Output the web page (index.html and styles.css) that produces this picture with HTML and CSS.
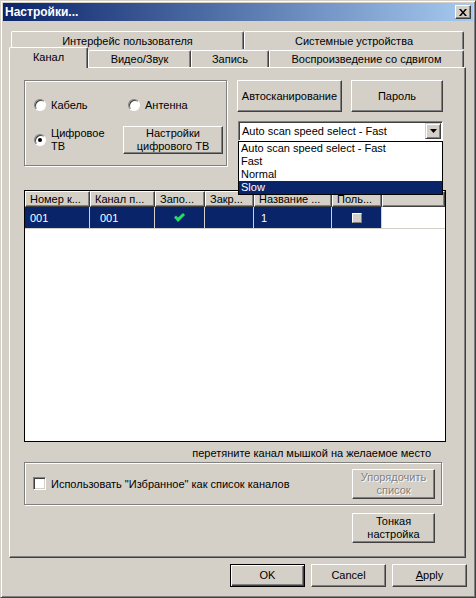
FILE: index.html
```html
<!DOCTYPE html>
<html lang="ru">
<head>
    <meta charset="UTF-8">
    <meta name="viewport" content="width=device-width, initial-scale=1.0">
    <title>Настройки...</title>
    <link rel="stylesheet" href="styles.css">
</head>
<body>
    <div class="window">
        <div class="titlebar">
            <span class="title">Настройки...</span>
            <button class="close-btn">
                <svg width="8" height="7" viewBox="0 0 8 7"><path d="M0 0h2l2 2.5L6 0h2L5 3.5 8 7H6L4 4.5 2 7H0l3-3.5z" fill="#000"/></svg>
            </button>
        </div>

        <div class="client">
            <!-- вкладки в два ряда -->
            <div class="tabs">
                <div class="tab-row back">
                    <div class="tab t-ui">Интерфейс пользователя</div>
                    <div class="tab t-dev">Системные устройства</div>
                </div>
                <div class="tab-row front">
                    <div class="tab active t-ch">Канал</div>
                    <div class="tab t-av">Видео/Звук</div>
                    <div class="tab t-rec">Запись</div>
                    <div class="tab t-ts">Воспроизведение со сдвигом</div>
                </div>
            </div>

            <div class="panel">
                <div class="top-row">
                    <div class="groupbox source-group">
                        <label class="radio-item"><span class="radio"></span>Кабель</label>
                        <label class="radio-item ant"><span class="radio"></span>Антенна</label>
                        <label class="radio-item"><span class="radio"><i class="dot"></i></span><span>Цифровое<br>ТВ</span></label>
                        <button class="btn dtv-btn">Настройки<br>цифрового ТВ</button>
                    </div>

                    <div class="scan-col">
                        <div class="btn-row">
                            <button class="btn autoscan-btn">Автосканирование</button>
                            <button class="btn pass-btn">Пароль</button>
                        </div>
                        <div class="combo">
                            <div class="combo-field">
                                <span class="combo-value">Auto scan speed select - Fast</span>
                                <span class="combo-arrow">
                                    <svg width="7" height="4" viewBox="0 0 7 4"><path d="M0 0h7L3.5 4z" fill="#000"/></svg>
                                </span>
                            </div>
                            <ul class="combo-list">
                                <li>Auto scan speed select - Fast</li>
                                <li>Fast</li>
                                <li>Normal</li>
                                <li class="selected">Slow</li>
                            </ul>
                        </div>
                    </div>
                </div>

                <div class="listview">
                    <div class="lv-header">
                        <div class="lv-col c1">Номер к...</div>
                        <div class="lv-col c2">Канал п...</div>
                        <div class="lv-col c3">Запо...</div>
                        <div class="lv-col c4">Закр...</div>
                        <div class="lv-col c5">Название ...</div>
                        <div class="lv-col c6">Поль...</div>
                        <div class="lv-col filler"></div>
                    </div>
                    <div class="lv-row">
                        <div class="lv-cell c1">001</div>
                        <div class="lv-cell c2 pad-wide">001</div>
                        <div class="lv-cell c3 center">
                            <svg width="11" height="9" viewBox="0 0 11 9"><path d="M0 4.5l2-2 2 2L9 0l2 2-7 7z" fill="#1fe05c"/></svg>
                        </div>
                        <div class="lv-cell c4"></div>
                        <div class="lv-cell c5 pad-mid">1</div>
                        <div class="lv-cell c6 center"><span class="mini-box"></span></div>
                        <div class="lv-cell filler"></div>
                    </div>
                </div>

                <div class="hint">перетяните канал мышкой на желаемое место</div>

                <div class="groupbox fav-group">
                    <label class="check-item"><span class="checkbox"></span>Использовать "Избранное" как список каналов</label>
                    <button class="btn sort-btn" disabled>Упорядочить<br>список</button>
                </div>

                <button class="btn fine-btn">Тонкая<br>настройка</button>
            </div>

            <div class="footer">
                <button class="btn dlg-btn default">OK</button>
                <button class="btn dlg-btn">Cancel</button>
                <button class="btn dlg-btn"><u>A</u>pply</button>
            </div>
        </div>
    </div>
</body>
</html>
```

FILE: styles.css
```css
:root {
    --face: #d4d0c8; --light: #fff; --shadow: #808080; --dark: #404040;
    --sel: #0a246a;
}
* { box-sizing: border-box; }
body {
    margin: 0; background: var(--face);
    font-family: "Liberation Sans", Arial, sans-serif; font-size: 11px; color: #000;
}
button { font: inherit; color: inherit; }

.window {
    width: 476px; height: 598px; padding: 2px; background: var(--face);
    border: 1px solid; border-color: var(--face) var(--dark) var(--dark) var(--face);
    box-shadow: inset 1px 1px var(--light), inset -1px -1px var(--shadow);
}

/* заголовок окна */
.titlebar {
    height: 18px; display: flex; align-items: center; justify-content: space-between;
    padding: 0 2px; background: linear-gradient(to right, #0a246a, #a6caf0);
}
.title { color: #fff; font-weight: bold; font-size: 12px; }
.close-btn {
    width: 16px; height: 14px; padding: 0; display: flex; align-items: center; justify-content: center;
    background: var(--face); border: 1px solid; border-color: var(--light) var(--dark) var(--dark) var(--light);
    box-shadow: inset -1px -1px var(--shadow);
}

.client { margin-top: 10px; padding: 0 7px 0 6px; }

/* вкладки */
.tab-row { display: flex; height: 18px; padding-left: 2px; }
.tab-row.front { align-items: flex-end; }
.tab {
    height: 18px; display: flex; align-items: center; justify-content: center;
    background: var(--face); white-space: nowrap;
    border: 1px solid; border-bottom: 0; border-color: var(--light) var(--dark) var(--light) var(--light);
    border-radius: 2px 2px 0 0; box-shadow: inset -1px 0 var(--shadow);
}
.tab-row.front .tab { height: 17px; }
.tab-row.front .tab.active {
    height: 21px; margin-bottom: -1px; margin-left: -2px; padding-bottom: 3px;
    position: relative; z-index: 2;
}
.t-ui { width: 233px; }
.t-dev { width: 220px; }
.t-ch { width: 79px; }
.t-av { width: 103px; }
.t-rec { width: 78px; }
.t-ts { width: 195px; }

.panel {
    width: 457px; height: 491px; padding: 12px 0 0 14px;
    border: 1px solid; border-color: var(--light) var(--dark) var(--dark) var(--light);
    box-shadow: inset -1px -1px var(--shadow);
}

/* кнопки */
.btn {
    padding: 0; background: var(--face); line-height: 13px; text-align: center;
    border: 1px solid; border-color: var(--light) var(--dark) var(--dark) var(--light);
    box-shadow: inset -1px -1px var(--shadow);
}
.btn:disabled { color: var(--shadow); text-shadow: 1px 1px var(--light); }

.groupbox {
    border: 1px solid var(--shadow);
    box-shadow: inset 1px 1px var(--light), 1px 1px var(--light);
}

.top-row { display: flex; align-items: flex-start; }
.source-group {
    width: 203px; height: 86px; padding: 18px 0 0 9px;
    display: grid; grid-template-columns: 89px 100px; grid-template-rows: 12px 28px;
    row-gap: 15px; align-items: center;
}
.radio-item { display: flex; align-items: center; gap: 5px; line-height: 13px; }
.radio-item.ant { margin-left: 5px; }
.radio {
    width: 12px; height: 12px; flex: none; border-radius: 50%; background: #fff;
    display: flex; align-items: center; justify-content: center;
    border: 1px solid; border-color: var(--shadow) var(--light) var(--light) var(--shadow);
    box-shadow: inset 1px 1px var(--dark);
}
.dot { width: 4px; height: 4px; border-radius: 50%; background: #000; }
.dtv-btn { width: 100px; height: 28px; }

.scan-col { width: 206px; margin-left: 10px; }
.btn-row { display: flex; gap: 9px; }
.autoscan-btn { width: 105px; height: 32px; }
.pass-btn { width: 92px; height: 32px; }

.combo { position: relative; width: 205px; margin: 9px 0 0 1px; }
.combo-field {
    height: 20px; display: flex; align-items: center; justify-content: space-between;
    padding: 0 1px 0 3px; background: #fff;
    border: 1px solid; border-color: var(--shadow) var(--light) var(--light) var(--shadow);
    box-shadow: inset 1px 1px var(--dark);
}
.combo-arrow {
    width: 16px; height: 16px; display: flex; align-items: center; justify-content: center;
    background: var(--face); border: 1px solid; border-color: var(--face) var(--dark) var(--dark) var(--face);
    box-shadow: inset 1px 1px var(--light), inset -1px -1px var(--shadow);
}
.combo-list {
    position: absolute; top: 100%; left: 0; z-index: 3; width: 205px;
    margin: 0; padding: 0; list-style: none; background: #fff; border: 1px solid #000;
}
.combo-list li { height: 13px; line-height: 13px; padding-left: 2px; }
.combo-list li.selected { background: var(--sel); color: #fff; }

/* список каналов */
.listview {
    width: 422px; height: 252px; margin-top: 24px; background: #fff;
    border: 1px solid #000;
}
.lv-header, .lv-row { display: flex; }
.lv-col {
    height: 16px; line-height: 14px; padding-left: 4px; white-space: nowrap; overflow: hidden;
    border: 1px solid; border-color: var(--light) var(--dark) var(--dark) var(--light);
    box-shadow: inset -1px -1px var(--shadow); background: var(--face);
}
.lv-row { height: 22px; border-bottom: 1px solid var(--face); }
.lv-cell {
    display: flex; align-items: center; padding-left: 5px;
    background: var(--sel); color: #fff; border-right: 1px solid var(--face);
}
.lv-cell.filler { background: #fff; border-right: 0; }
.lv-cell.pad-wide { padding-left: 10px; }
.lv-cell.pad-mid { padding-left: 7px; }
.lv-cell.center { justify-content: center; padding-left: 0; }
.c1 { width: 65px; }
.c2 { width: 65px; }
.c3 { width: 50px; }
.c4 { width: 49px; }
.c5 { width: 78px; }
.c6 { width: 50px; }
.filler { flex: 1; }
.mini-box {
    width: 10px; height: 10px; background: var(--face);
    border: 1px solid; border-color: var(--light) var(--shadow) var(--shadow) var(--light);
}

.hint { width: 422px; margin-top: 5px; padding-right: 15px; text-align: right; line-height: 13px; }

.fav-group {
    width: 418px; height: 43px; margin-top: 2px; padding: 0 6px 0 8px;
    display: flex; align-items: center;
}
.check-item { display: flex; align-items: center; gap: 5px; }
.checkbox {
    width: 13px; height: 13px; background: #fff;
    border: 1px solid; border-color: var(--shadow) var(--light) var(--light) var(--shadow);
    box-shadow: inset 1px 1px var(--dark), inset -1px -1px var(--face);
}
.sort-btn { width: 83px; height: 30px; margin-left: auto; }
.fine-btn { display: block; width: 83px; height: 30px; margin: 8px 0 0 328px; }

/* нижние кнопки диалога */
.footer { display: flex; justify-content: flex-end; gap: 6px; margin: 6px -1px 0 0; }
.dlg-btn { width: 75px; height: 23px; }
.dlg-btn.default {
    border-color: #000;
    box-shadow: inset 1px 1px var(--light), inset -1px -1px var(--dark), inset -2px -2px var(--shadow);
}
```
